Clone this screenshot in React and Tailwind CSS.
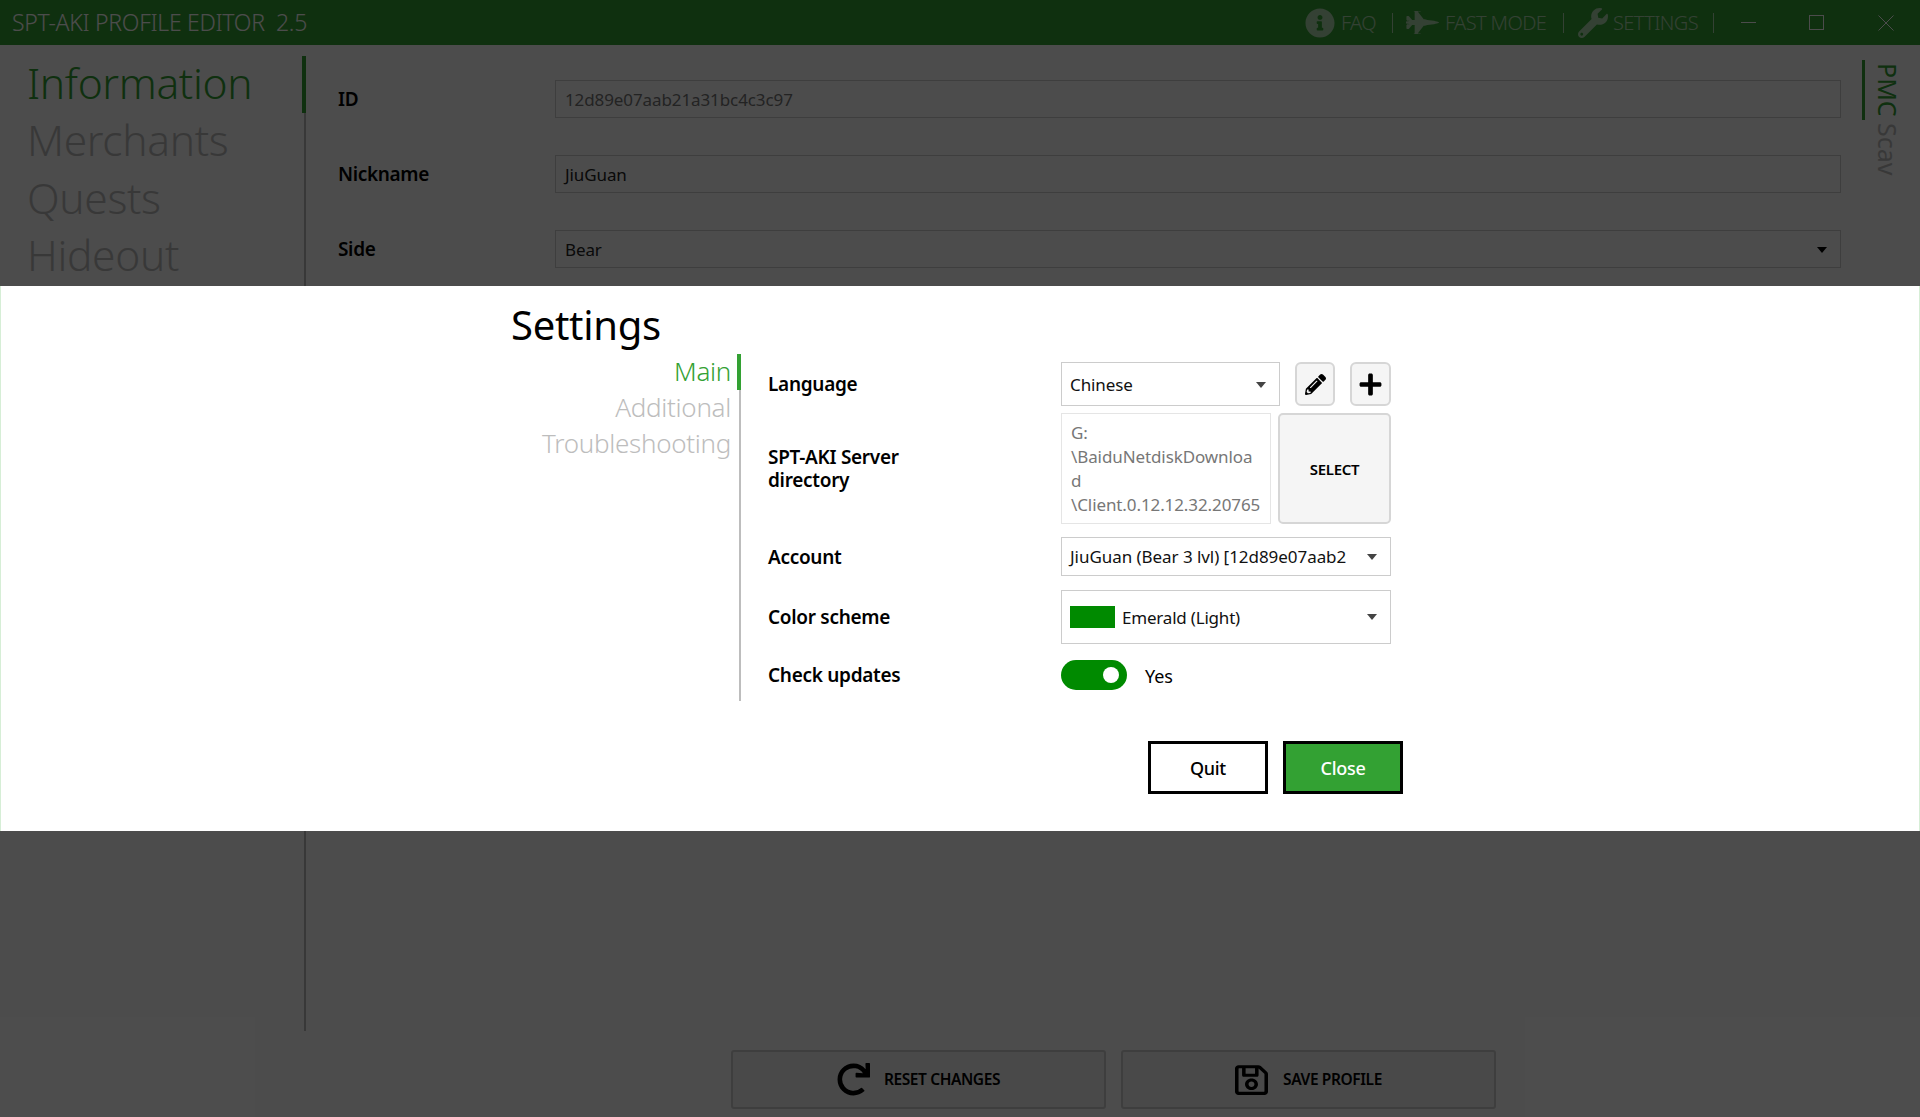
import React from "react";
import { FaInfoCircle, FaFighterJet, FaWrench, FaPencilAlt, FaPlus, FaRedo, FaRegSave } from "react-icons/fa";

const font = { fontFamily: '"Noto Sans", "Open Sans", sans-serif' };

function Caret({ className = "" }) {
  return (
    <svg viewBox="0 0 10 6" className={"h-[6px] w-[10px] shrink-0 " + className} fill="currentColor">
      <path d="M0 0h10L5 6z" />
    </svg>
  );
}

function Field({ label, children, rowClass }) {
  return (
    <div className={"flex items-center " + rowClass}>
      <div className="w-[293px] shrink-0 pt-[1px] text-[19px] leading-[23px] font-semibold tracking-[-0.3px] text-black">{label}</div>
      {children}
    </div>
  );
}

function BackForm({ label, value, select, muted, rowClass }) {
  return (
    <div className={"flex items-center " + rowClass}>
      <div className="w-[217px] shrink-0 pt-[1px] text-[19px] font-semibold tracking-[-0.35px] text-black">{label}</div>
      <div className="flex h-[38px] w-[1286px] items-center justify-between border border-[#cfcfcf] bg-white px-[9px] pt-[1px] text-[17px] tracking-[-0.1px] text-[#222]">
        <span className={muted ? "text-[#777]" : ""}>{value}</span>
        {select && <Caret className="mr-[4px] text-black" />}
      </div>
    </div>
  );
}

export default function App() {
  return (
    <div className="relative flex h-[1117px] w-[1920px] flex-col overflow-hidden bg-white" style={font}>
      {/* title bar */}
      <header className="flex h-[45px] shrink-0 items-center justify-between bg-[#33a133] pl-[12px] text-white">
        <div className="text-[23px] font-light tracking-[-0.3px] whitespace-pre">SPT-AKI PROFILE EDITOR  2.5</div>
        <div className="flex items-center text-[20px] font-light tracking-[-0.6px]">
          <div className="flex items-center opacity-60">
            <FaInfoCircle className="h-[30px] w-[30px]" />
            <span className="ml-[6px] w-[44px]">FAQ</span>
            <span className="ml-[7px] h-[20px] w-px bg-white" />
            <FaFighterJet className="ml-[13px] h-[33px] w-[33px]" />
            <span className="ml-[6px] w-[111px]">FAST MODE</span>
            <span className="ml-[7px] h-[20px] w-px bg-white" />
            <FaWrench className="ml-[14px] h-[30px] w-[30px]" />
            <span className="ml-[5px] w-[93px]">SETTINGS</span>
            <span className="ml-[7px] h-[20px] w-px bg-white" />
          </div>
          <div className="ml-[27px] h-px w-[15px] bg-white" />
          <div className="ml-[53px] h-[15px] w-[15px] border border-white" />
          <svg viewBox="0 0 16 16" className="mr-[26px] ml-[54px] h-[16px] w-[16px]" stroke="white" strokeWidth="1" fill="none">
            <path d="M0.5 0.5l15 15M15.5 0.5l-15 15" />
          </svg>
        </div>
      </header>

      {/* page behind dialog */}
      <main className="flex min-h-0 flex-1">
        <nav className="relative mt-[11px] h-[975px] w-[306px] shrink-0 border-r-2 border-[#bdbdbd] pl-[27px] text-[42.5px] leading-[57.3px] font-light tracking-[-0.35px] text-[#bdbdbd]">
          <span className="absolute top-0 right-[-2px] h-[57px] w-[4px] bg-[#33a133]" />
          <div className="-mt-[2px]">
            <div className="text-[#33a133]">Information</div>
            <div>Merchants</div>
            <div>Quests</div>
            <div>Hideout</div>
          </div>
        </nav>
        <div className="flex min-w-0 flex-1 flex-col">
          <div className="flex flex-1 justify-between">
            <div className="ml-[32px] pt-[35px]">
              <BackForm label="ID" value="12d89e07aab21a31bc4c3c97" muted rowClass="mb-[37px]" />
              <BackForm label="Nickname" value="JiuGuan" rowClass="mb-[37px]" />
              <BackForm label="Side" value="Bear" select rowClass="" />
            </div>
            <div className="mt-[15px] mr-[14px] flex h-[130px] w-[44px] justify-start">
              <div className="h-[60px] w-[3px] bg-[#33a133]" />
              <div className="mt-[3px] ml-[6px] h-[120px] w-[33px] text-[25px] leading-[33px] font-normal whitespace-nowrap [writing-mode:vertical-rl] text-[#bdbdbd]">
                <span className="text-[#33a133]">PMC</span> Scav
              </div>
            </div>
          </div>
          <div className="mb-[8px] ml-[425px] flex gap-[15px]">
            <button className="flex h-[59px] w-[375px] items-center justify-center gap-[14px] rounded-[3px] border-2 border-[#cfcfcf] bg-[#f5f5f5] text-[15.5px] font-semibold tracking-[-0.4px] text-black">
              <FaRedo className="h-[33px] w-[33px]" />
              RESET CHANGES
            </button>
            <button className="flex h-[59px] w-[375px] items-center justify-center gap-[15px] rounded-[3px] border-2 border-[#cfcfcf] bg-[#f5f5f5] text-[15.5px] font-semibold tracking-[-0.4px] text-black">
              <FaRegSave className="h-[34px] w-[33px]" preserveAspectRatio="none" />
              SAVE PROFILE
            </button>
          </div>
        </div>
      </main>

      {/* overlay + dialog */}
      <div className="absolute inset-0 flex items-center bg-black/70">
        <section className="h-[545px] w-full border-x border-[#d6eed6] bg-white pl-[510px]">
          <h1 className="mt-[10px] text-[40px] leading-[58px] tracking-[-0.3px] text-black">Settings</h1>
          <div className="flex">
            <div className="relative h-[347px] w-[230px] shrink-0 border-r-2 border-[#bdbdbd] pr-[8px] text-right text-[26px] leading-[36px] font-light tracking-[-0.3px] text-[#bdbdbd]">
              <span className="absolute top-0 right-[-2px] h-[36px] w-[4px] bg-[#33a133]" />
              <div className="-mt-[1px]">
                <div className="text-[#33a133]">Main</div>
                <div>Additional</div>
                <div>Troubleshooting</div>
              </div>
            </div>
            <div className="ml-[27px] flex flex-col">
              <Field label="Language" rowClass="mt-[8px] h-[44px]">
                <div className="flex h-[44px] w-[219px] items-center justify-between border border-[#cccccc] pt-[1px] pr-[13px] pl-[8px] text-[17px] tracking-[-0.1px] text-[#111]">
                  Chinese
                  <Caret className="text-[#444]" />
                </div>
                <button className="ml-[15px] flex h-[44px] w-[40px] items-center justify-center rounded-[6px] border-2 border-[#d6d6d6] bg-[#f5f5f5]">
                  <FaPencilAlt className="h-[21px] w-[21px] text-black" />
                </button>
                <button className="ml-[15px] flex h-[44px] w-[41px] items-center justify-center rounded-[6px] border-2 border-[#d6d6d6] bg-[#f5f5f5]">
                  <FaPlus className="h-[25px] w-[25px] text-black" />
                </button>
              </Field>
              <Field label={<>SPT-AKI Server<br />directory</>} rowClass="mt-[7px] h-[111px]">
                <div className="h-[111px] w-[210px] border border-[#e5e5e5] px-[9px] pt-[7px] text-[17px] leading-[24px] tracking-[-0.1px] whitespace-nowrap text-[#777]">
                  G:<br />\BaiduNetdiskDownloa<br />d<br />\Client.0.12.12.32.20765
                </div>
                <button className="ml-[7px] flex h-[111px] w-[113px] items-center justify-center rounded-[5px] border-2 border-[#d6d6d6] bg-[#f5f5f5] pt-[1px] text-[15px] font-semibold tracking-[-0.3px] text-black">
                  SELECT
                </button>
              </Field>
              <Field label="Account" rowClass="mt-[13px] h-[39px]">
                <div className="flex h-[39px] w-[330px] items-center justify-between border border-[#cccccc] pt-[1px] pr-[13px] pl-[8px] text-[17px] tracking-[-0.05px] whitespace-nowrap text-[#111]">
                  JiuGuan (Bear 3 lvl) [12d89e07aab2
                  <Caret className="text-[#444]" />
                </div>
              </Field>
              <Field label="Color scheme" rowClass="mt-[14px] h-[54px]">
                <div className="flex h-[54px] w-[330px] items-center border border-[#cccccc] pr-[13px] pl-[8px] text-[17px] tracking-[-0.2px] text-[#111]">
                  <span className="h-[22px] w-[45px] bg-[#008a00]" />
                  <span className="ml-[7px] flex-1 pt-[1px]">Emerald (Light)</span>
                  <Caret className="text-[#444]" />
                </div>
              </Field>
              <Field label="Check updates" rowClass="mt-[16px] h-[30px]">
                <div className="flex h-[30px] w-[66px] items-center justify-end rounded-full bg-[#008a00] pr-[8px]">
                  <span className="h-[16px] w-[16px] rounded-full bg-white" />
                </div>
                <span className="ml-[18px] pt-[2px] text-[18px] tracking-[-0.15px] text-black">Yes</span>
              </Field>
              <div className="mt-[51px] ml-[380px] flex gap-[15px]">
                <button className="h-[53px] w-[120px] border-[3px] border-black bg-white pt-[1px] text-[18px] font-medium tracking-[-0.3px] text-black">Quit</button>
                <button className="h-[53px] w-[120px] border-[3px] border-black bg-[#33a133] pt-[1px] text-[18px] font-medium tracking-[-0.3px] text-white">Close</button>
              </div>
            </div>
          </div>
        </section>
      </div>
    </div>
  );
}
